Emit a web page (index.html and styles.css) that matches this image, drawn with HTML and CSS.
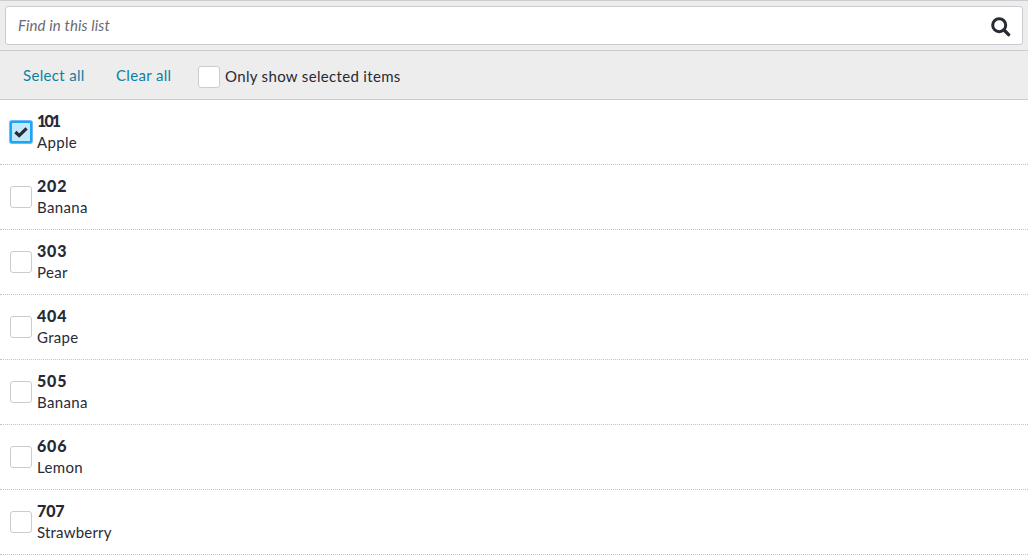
FILE: index.html
```html
<!DOCTYPE html>
<html lang="en">
<head>
<meta charset="utf-8">
<title>List</title>
<link rel="stylesheet" href="styles.css">
</head>
<body>
<div class="search-bar">
  <div class="search-box">
    <span class="placeholder">Find in this list</span>
    <svg class="search-icon" width="20" height="20" viewBox="0 0 20 20"><circle cx="8.2" cy="8.2" r="6.5"/><path d="M13 13L17.6 17.6"/></svg>
  </div>
</div>
<div class="toolbar">
  <a class="link select">Select all</a>
  <a class="link clear">Clear all</a>
  <span class="checkbox"></span>
  <span class="toggle-label">Only show selected items</span>
</div>
<ul class="list">
  <li class="row"><span class="checkbox checked"><svg width="14" height="12" viewBox="0 0 14 12"><path d="M1.4 6L5.2 9.6L12.6 2.4"/></svg></span><div class="item"><b class="code n101">101</b><span class="name">Apple</span></div></li>
  <li class="row"><span class="checkbox"></span><div class="item"><b class="code">202</b><span class="name">Banana</span></div></li>
  <li class="row"><span class="checkbox"></span><div class="item"><b class="code">303</b><span class="name">Pear</span></div></li>
  <li class="row"><span class="checkbox"></span><div class="item"><b class="code">404</b><span class="name">Grape</span></div></li>
  <li class="row"><span class="checkbox"></span><div class="item"><b class="code">505</b><span class="name">Banana</span></div></li>
  <li class="row"><span class="checkbox"></span><div class="item"><b class="code">606</b><span class="name">Lemon</span></div></li>
  <li class="row"><span class="checkbox"></span><div class="item"><b class="code n707">707</b><span class="name strawberry">Strawberry</span></div></li>
</ul>
</body>
</html>
```
FILE: styles.css
```css
* { box-sizing: border-box; }
body {
  margin: 0;
  background: #fff;
  color: #282a36;
  font: 15px/22px Lato, "Open Sans", sans-serif;
  overflow: hidden;
}
.search-bar {
  height: 51px;
  padding: 5px;
  background: #ededed;
  border-top: 1px solid #ccccd0;
  border-bottom: 1px solid #ccccd0;
}
.search-box {
  height: 39px;
  display: flex;
  align-items: center;
  justify-content: space-between;
  padding: 0 11px 0 12px;
  background: #fff;
  border: 1px solid #ccccd0;
  border-radius: 3px;
}
.placeholder { font-style: italic; color: #686b73; letter-spacing: 0.12px; padding-bottom: 1px; }
.search-icon { fill: none; stroke: #282a36; stroke-width: 3; stroke-linecap: butt; margin-top: 2px; }
.search-icon path { stroke-width: 3.4; stroke-linecap: round; }
.toolbar {
  height: 49px;
  display: flex;
  align-items: center;
  padding: 3px 0 0 23px;
  background: #ededed;
  border-bottom: 1px solid #ccccd0;
}
.link { color: #0d7fa3; padding-bottom: 4px; }
.select { width: 93px; }
.clear { width: 82px; }
.checkbox {
  flex: none;
  display: flex;
  align-items: center;
  justify-content: center;
  width: 22px;
  height: 22px;
  background: #fff;
  border: 1px solid #ccccd0;
  border-radius: 3px;
}
.toggle-label { margin-left: 5px; padding-bottom: 2px; }
.list { list-style: none; margin: 0; padding: 0; }
.row {
  height: 65px;
  display: flex;
  align-items: center;
  padding-left: 10px;
  border-bottom: 1px dotted #c4c4c8;
}
.checked {
  border: 2px solid #16a8f5;
  background: #c1e8fb;
  box-shadow: 0 0 0 1px #78b4fa;
  border-radius: 2px;
}
.checked svg { fill: none; stroke: #282a36; stroke-width: 3.2; }
.item { margin-left: 5px; padding-bottom: 2px; }
.code {
  display: block;
  height: 21px;
  font-size: 16px;
  line-height: 21px;
  font-weight: 900;
  letter-spacing: 0.8px;
}
.n101 { letter-spacing: -1.9px; }
.n707 { letter-spacing: -0.1px; }
.name { display: block; height: 22px; }
.select, .clear, .toggle-label, .name { letter-spacing: 0.33px; }
.strawberry { letter-spacing: 0.2px; }
```
